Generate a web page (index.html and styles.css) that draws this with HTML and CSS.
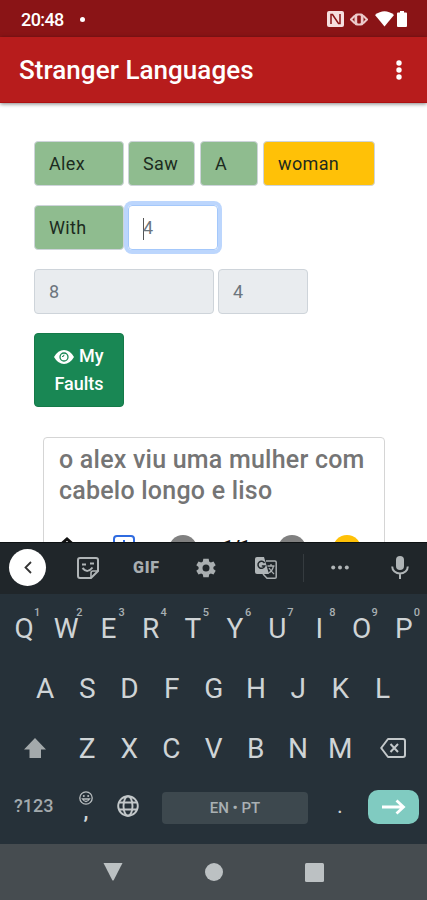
FILE: index.html
```html
<!DOCTYPE html>
<html lang="pt">
<head>
<meta charset="UTF-8" />
<meta name="viewport" content="width=device-width, initial-scale=1" />
<title>Stranger Languages</title>
<link rel="stylesheet" href="styles.css">
</head>
<body>

  <div class="statusbar">
    <span class="time">20:48</span>
    <span class="notif"></span>
    <div class="status-icons">
      <svg width="17" height="16" viewBox="0 0 17 16"><rect width="17" height="16" rx="2" fill="#f6dfdf"/><path d="M4 13V3.500h1.500l6 9H13V3" fill="none" stroke="#8a1416" stroke-width="1.500"/></svg>
      <svg class="rotate" width="18" height="13" viewBox="0 0 18 13"><path d="M5 2.500L1 6.500l4 4M13 2.500l4 4-4 4" fill="none" stroke="#eccaca" stroke-width="2"/><rect x="4.500" y=".5" width="9" height="12" rx="2.500" fill="#eccaca"/><rect x="7.200" y="2.500" width="3.600" height="8" rx="1" fill="#8a1416"/></svg>
      <svg class="wifi" width="19" height="16" viewBox="0 0 19 16"><path d="M0 4Q9.500-3.500 19 4L9.500 15.500z" fill="#fff"/></svg>
      <svg class="battery" width="10" height="16" viewBox="0 0 10 16"><path d="M3 0h4v1.500h2q1 0 1 1V15q0 1-1 1H1q-1 0-1-1V2.500q0-1 1-1h2z" fill="#fff"/></svg>
    </div>
  </div>

  <header class="appbar">
    <h1>Stranger Languages</h1>
    <svg width="6" height="20" viewBox="0 0 6 20"><g fill="#fff"><circle cx="3" cy="3" r="2.700"/><circle cx="3" cy="10" r="2.700"/><circle cx="3" cy="17" r="2.700"/></g></svg>
  </header>

  <main class="content">
    <div class="words">
      <div class="word right w-90">Alex</div>
      <div class="word right w-67">Saw</div>
      <div class="word right w-58">A</div>
      <div class="word wrong w-112">woman</div>
    </div>
    <div class="words">
      <div class="word right w-90">With</div>
      <div class="word active w-90"><span class="caret"></span>4</div>
    </div>
    <div class="words">
      <div class="word locked w-180">8</div>
      <div class="word locked w-90">4</div>
    </div>
    <button class="faults"><svg width="20" height="14" viewBox="0 0 20 14"><path d="M0 7Q4 0 10 0t10 7q-4 7-10 7T0 7z" fill="#fff"/><circle cx="10" cy="7" r="4" fill="none" stroke="#198754" stroke-width="1.300"/><path d="M8 6.500q2 .500 2-1.800" fill="none" stroke="#198754"/></svg> My<br>Faults</button>

    <div class="card">
      <p>o alex viu uma mulher com<br>cabelo longo e liso</p>
      <div class="controls">
        <svg class="home" width="20" height="20" viewBox="0 0 20 20"><path d="M1 11l9-8 9 8M4 10v9h12v-9" fill="none" stroke="#111" stroke-width="3"/></svg>
        <svg class="add" width="22" height="22" viewBox="0 0 22 22"><rect x="1" y="1" width="20" height="20" rx="3" fill="none" stroke="#2f6be0" stroke-width="2"/><path d="M11 5v12M5 11h12" stroke="#2f6be0" stroke-width="2"/></svg>
        <span class="dot prev"></span>
        <span class="count">1/1</span>
        <span class="dot next"></span>
        <span class="dot hint"></span>
      </div>
    </div>
  </main>

  <div class="keyboard">
    <div class="toolbar">
      <span class="back"><svg width="8" height="13" viewBox="0 0 8 13"><path d="M7 1 1.500 6.500 7 12" fill="none" stroke="#333" stroke-width="1.800"/></svg></span>
      <svg class="sticker" width="22" height="22" viewBox="0 0 22 22"><path d="M3 1h16q2 0 2 2v11l-7 7H3q-2 0-2-2V3q0-2 2-2z" fill="none" stroke="#b0b5b7" stroke-width="2"/><path d="M14 21v-5q0-2 2-2h5" fill="none" stroke="#b0b5b7" stroke-width="1.600"/><path d="M5 7.500h4M13 6.500h4M5.500 11q5 6 10-.500" fill="none" stroke="#b0b5b7" stroke-width="2"/></svg>
      <span class="gif">GIF</span>
      <svg class="gear" width="24" height="24" viewBox="0 0 24 24"><path fill="#a9aeb0" fill-rule="evenodd" d="M19.400 13a7.500 7.500 0 0 0 0-2l2.300-1.700-2.200-3.800-2.700 1.100a8 8 0 0 0-1.700-1L14.700 2.700h-5.400L8.900 5.600a8 8 0 0 0-1.700 1L4.500 5.500 2.300 9.300 4.600 11a7.500 7.500 0 0 0 0 2l-2.300 1.700 2.200 3.800 2.700-1.100a8 8 0 0 0 1.700 1l.4 2.900h5.400l.4-2.900a8 8 0 0 0 1.700-1l2.700 1.100 2.200-3.800zM12 15.500a3.500 3.500 0 1 1 0-7 3.500 3.500 0 0 1 0 7z"/></svg>
      <svg class="translate" width="22" height="22" viewBox="0 0 22 22"><path d="M11 4h9q1.200 0 1.200 1.200v15q0 1-1.200 1h-8L8 17" fill="none" stroke="#a9aeb0" stroke-width="1.500"/><path d="M2 0h7l5 17H2q-2 0-2-2V2q0-2 2-2z" fill="#b0b5b7"/><path d="M9.500 6a3.500 3.500 0 1 0 .300 3H6.800" fill="none" stroke="#20272b" stroke-width="1.500"/><path d="M12.500 9h7M16 7v2M18.500 9q-1 5-5 7M14 11q2 3 5 6" fill="none" stroke="#a9aeb0" stroke-width="1.300"/></svg>
      <span class="divider"></span>
      <svg class="more" width="18" height="5" viewBox="0 0 18 5"><g fill="#b0b5b7"><circle cx="2.200" cy="2.500" r="2"/><circle cx="9" cy="2.500" r="2"/><circle cx="15.800" cy="2.500" r="2"/></g></svg>
      <svg class="mic" width="18" height="23" viewBox="0 0 18 23"><rect x="5" y="0" width="8" height="14" rx="4" fill="#b0b5b7"/><path d="M1.200 10.500a7.800 7 0 0 0 15.600 0M9 17v6" fill="none" stroke="#b0b5b7" stroke-width="2"/></svg>
    </div>

    <div class="keys">
      <div class="row row-top">
        <span class="key">Q<sup>1</sup></span><span class="key">W<sup>2</sup></span><span class="key">E<sup>3</sup></span><span class="key">R<sup>4</sup></span><span class="key">T<sup>5</sup></span><span class="key">Y<sup>6</sup></span><span class="key">U<sup>7</sup></span><span class="key">I<sup>8</sup></span><span class="key">O<sup>9</sup></span><span class="key">P<sup>0</sup></span>
      </div>
      <div class="row row-home">
        <span class="key">A</span><span class="key">S</span><span class="key">D</span><span class="key">F</span><span class="key">G</span><span class="key">H</span><span class="key">J</span><span class="key">K</span><span class="key">L</span>
      </div>
      <div class="row row-low">
        <span class="key"><svg width="22" height="20" viewBox="0 0 22 20"><path d="M11 0l11 11.500h-5V20H5.500v-8.500H0z" fill="#a3a9ab"/></svg></span>
        <span class="key">Z</span><span class="key">X</span><span class="key">C</span><span class="key">V</span><span class="key">B</span><span class="key">N</span><span class="key">M</span>
        <span class="key"><svg width="26" height="20" viewBox="0 0 26 20"><path d="M8 1h15q2 0 2 2v14q0 2-2 2H8L1.200 10z" fill="none" stroke="#c3c8ca" stroke-width="2" stroke-linejoin="round"/><path d="M10.500 6l7.500 8M18 6l-7.500 8" stroke="#c3c8ca" stroke-width="2"/></svg></span>
      </div>
      <div class="row row-space">
        <span class="sym">?123</span>
        <span class="emoji"><svg width="14" height="14" viewBox="0 0 14 14"><g fill="none" stroke="#b9bec0" stroke-width="1.300"><circle cx="7" cy="7" r="6.200"/><path d="M3.500 8q3.500 5 7 0z"/></g><circle cx="4.800" cy="5" r="1" fill="#b9bec0"/><circle cx="9.200" cy="5" r="1" fill="#b9bec0"/></svg><b>,</b></span>
        <span class="globe"><svg width="22" height="22" viewBox="0 0 22 22"><g fill="none" stroke="#c3c8ca" stroke-width="1.900"><circle cx="11" cy="11" r="9.800"/><ellipse cx="11" cy="11" rx="4.500" ry="9.800"/><path d="M2 7.500h18M2 14.500h18"/></g></svg></span>
        <span class="space">EN • PT</span>
        <span class="period">.</span>
        <span class="enter"><svg width="24" height="16" viewBox="0 0 24 16"><path d="M0 8h21M14.500 1.500L21.500 8l-7 6.500" fill="none" stroke="#fff" stroke-width="2.800"/></svg></span>
      </div>
    </div>
  </div>

  <div class="navbar">
    <svg width="20" height="18" viewBox="0 0 20 18"><path d="M.5 0h19L10.800 17q-.8 1-1.600 0z" fill="#bcc1c3"/></svg>
    <svg width="18" height="18" viewBox="0 0 18 18"><circle cx="9" cy="9" r="9" fill="#bcc1c3"/></svg>
    <svg width="19" height="19" viewBox="0 0 19 19"><rect width="19" height="19" rx="1.500" fill="#bcc1c3"/></svg>
  </div>

</body>
</html>
```
FILE: styles.css
```css
* {
  box-sizing: border-box;
}
body {
  margin: 0;
  height: 900px;
  display: flex;
  flex-direction: column;
  overflow: hidden;
  background: #fff;
  font-family: Roboto, sans-serif;
}
svg {
  display: block;
  flex: none;
}
.statusbar {
  height: 37px;
  flex: none;
  display: flex;
  align-items: center;
  padding: 1px 20px 0 21px;
  background: #8a1416;
  color: #fff;
}
.time {
  width: 43px;
  font-size: 18px;
  font-weight: 500;
  letter-spacing: -0.6px;
}
.notif {
  width: 5px;
  height: 5px;
  margin-left: 16px;
  border-radius: 50%;
  background: #fff;
}
.status-icons {
  margin-left: auto;
  display: flex;
  align-items: center;
}
.rotate {
  margin-left: 6px;
}
.wifi {
  margin-left: 7px;
}
.battery {
  margin-left: 3px;
}
.appbar {
  height: 66px;
  flex: none;
  display: flex;
  align-items: center;
  justify-content: space-between;
  padding: 0 25px 0 19px;
  background: #b71c1c;
  border-bottom: 1px solid #ad0f10;
  box-shadow: 0 1px 4px rgba(0, 0, 0, 0.5);
  color: #fff;
}
h1 {
  margin: 0;
  font-size: 26px;
  font-weight: 500;
  letter-spacing: 0.05px;
}
.content {
  height: 439px;
  flex: none;
  overflow: hidden;
  padding: 38px 34px 0;
}
.words {
  display: flex;
  gap: 4px;
  margin-bottom: 19px;
}
.word {
  height: 45px;
  padding: 0 14px;
  border: 1px solid #ced4da;
  border-radius: 4px;
  font-size: 18px;
  line-height: 43px;
  letter-spacing: 0.35px;
  color: #1c2b20;
}
.w-58 { width: 58px; margin-left: 1px; }
.w-67 { width: 67px; }
.w-90 { width: 90px; }
.w-112 { width: 112px; margin-left: 1px; }
.w-180 { width: 180px; }
.right {
  background: #8fbc8f;
}
.wrong {
  background: #ffc107;
}
.active {
  border-color: #a4c8fb;
  box-shadow: 0 0 0 4px #bcd6fd;
  color: #6c757d;
}
.caret {
  display: inline-block;
  width: 1px;
  height: 22px;
  margin-right: -1px;
  vertical-align: middle;
  background: #555;
}
.locked {
  background: #e9ecef;
  color: #6c757d;
}
.faults {
  display: block;
  width: 90px;
  height: 74px;
  padding: 0;
  border: 1px solid #157a49;
  border-radius: 4px;
  background: #198754;
  color: #fff;
  font-family: inherit;
  font-size: 18px;
  font-weight: 500;
  line-height: 28px;
}
.faults svg {
  display: inline-block;
  vertical-align: -2px;
}
.card {
  width: 342px;
  height: 160px;
  margin: 30px 0 0 9px;
  padding: 6px 15px;
  border: 1px solid #d5d5d5;
  border-radius: 4px;
}
.card p {
  margin: 0;
  color: #757575;
  font-size: 25px;
  font-weight: 500;
  line-height: 31px;
  letter-spacing: 0.22px;
  white-space: nowrap;
}
.controls {
  display: flex;
  margin-top: 29px;
}
.home {
  margin: 1px 0 0 -2px;
}
.add {
  margin-left: 36px;
}
.dot {
  width: 28px;
  height: 28px;
  border-radius: 50%;
  background: #808080;
}
.prev {
  margin-left: 34px;
}
.count {
  width: 28px;
  margin: 1px 27px 0 26px;
  font-size: 18px;
  font-weight: 700;
  color: #111;
}
.hint {
  margin-left: 27px;
  background: #ffc107;
}
.keyboard {
  height: 302px;
  flex: none;
  background: #263139;
  color: #cfd4d6;
}
.toolbar {
  height: 52px;
  display: flex;
  align-items: center;
  padding: 0 0 2px 9px;
  background: #20262a;
  border-top: 1px solid #0e1214;
}
.back {
  width: 37px;
  height: 37px;
  display: flex;
  align-items: center;
  justify-content: center;
  border-radius: 50%;
  background: #fff;
}
.sticker {
  margin-left: 31px;
}
.gif {
  width: 29px;
  margin-left: 34px;
  font-size: 16px;
  font-weight: 900;
  letter-spacing: 0.8px;
  color: #a9aeb0;
}
.gear {
  margin-left: 32px;
}
.translate {
  margin-left: 37px;
}
.divider {
  width: 1px;
  height: 28px;
  margin-left: 26px;
  background: #353b3f;
}
.more {
  margin-left: 27px;
}
.mic {
  margin-left: 42px;
}
.keys {
  padding-top: 4px;
}
.row {
  height: 60px;
  display: grid;
}
.row-top {
  grid-template-columns: repeat(10, 42.2px);
  padding-left: 3px;
}
.row-home {
  grid-template-columns: repeat(9, 42.2px);
  padding-left: 24px;
}
.row-low {
  grid-template-columns: 63px repeat(7, 42.2px) 64px;
  padding-left: 3px;
}
.key {
  position: relative;
  display: flex;
  align-items: center;
  justify-content: center;
  font-size: 28px;
}
.key sup {
  position: absolute;
  top: 8px;
  left: 31px;
  font-size: 11px;
  font-weight: 500;
  line-height: 13px;
  color: #a9b0b3;
}
.row-space {
  display: flex;
  align-items: center;
  height: 55px;
  padding-left: 14px;
}
.sym {
  width: 52px;
  font-size: 18px;
  font-weight: 500;
  color: #a3aaad;
}
.emoji {
  width: 14px;
  margin-left: 13px;
  display: flex;
  flex-direction: column;
  align-items: center;
}
.emoji b {
  height: 16px;
  font-size: 20px;
  line-height: 12px;
}
.globe {
  margin-left: 24px;
}
.space {
  width: 146px;
  height: 32px;
  margin: 4px 0 0 23px;
  border-radius: 4px;
  background: #3d484e;
  color: #a9b0b3;
  font-size: 15px;
  font-weight: 500;
  line-height: 32px;
  text-align: center;
}
.period {
  width: 8px;
  margin-left: 28px;
  font-size: 22px;
  text-align: center;
}
.enter {
  width: 51px;
  height: 34px;
  margin: 3px 0 0 24px;
  display: flex;
  align-items: center;
  justify-content: center;
  border-radius: 10px;
  background: #80cbc1;
}
.navbar {
  height: 56px;
  flex: none;
  display: flex;
  align-items: center;
  gap: 82px;
  padding-left: 103px;
  background: #464c50;
}
```
